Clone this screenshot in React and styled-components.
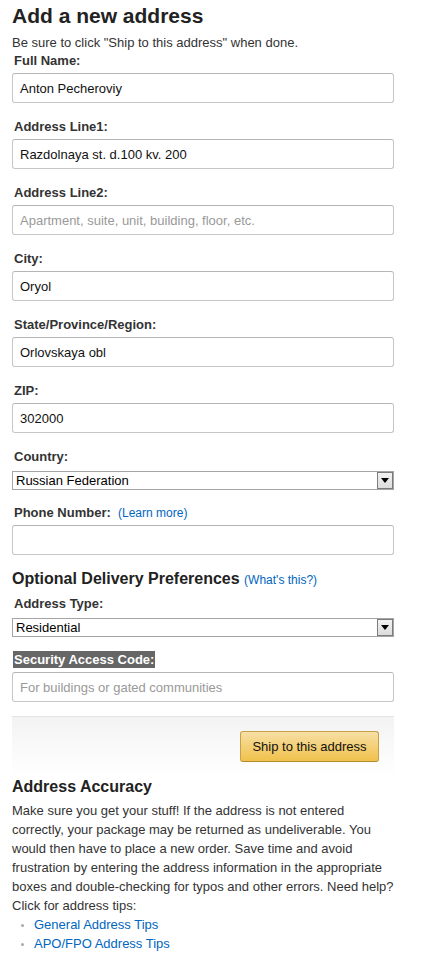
import styled, { createGlobalStyle } from 'styled-components'

const Global = createGlobalStyle`
  body {
    margin: 0;
    background: #fff;
    font-family: "Liberation Sans", Arial, sans-serif;
    color: #333;
  }
`

const Page = styled.div`
  width: 382px;
  padding: 4px 0 0 12px;
  font-size: 13px;
`

const Title = styled.h1`
  margin: 0;
  font-size: 21px;
  line-height: 24px;
  font-weight: bold;
  color: #222;
`

const Intro = styled.p`
  margin: 7px 0 2px;
  line-height: 16px;
`

const Field = styled.div`
  display: flex;
  flex-direction: column;
  gap: ${p => (p.$select ? '6px' : '4px')};
  margin-bottom: ${p => (p.$last ? '0' : p.$select ? '15px' : '16px')};
`

const Label = styled.label`
  padding-left: 2px;
  font-weight: bold;
  line-height: 16px;
  color: #333;
`

const Marked = styled.span`
  background: #666;
  color: #fff;
  padding: 1px 1px;
  margin-left: -1px;
`

const Link = styled.a`
  color: #0066c0;
  text-decoration: none;
  font-size: ${p => p.$size || '13px'};
  font-weight: normal;
  cursor: pointer;
`

const Input = styled.input`
  box-sizing: border-box;
  width: 100%;
  height: 30px;
  padding: 0 7px;
  border: 1px solid #c6c6c6;
  border-top-color: #b5b5b5;
  border-radius: 3px;
  font: 13px "Liberation Sans", Arial, sans-serif;
  color: #111;
  outline: none;
  &::placeholder {
    color: #999;
  }
`

const SelectBox = styled.div`
  display: flex;
  align-items: stretch;
  height: 19px;
  box-sizing: border-box;
  border: 1px solid #a5a5a5;
  background: #fff;
`

const Select = styled.select`
  flex: 1;
  appearance: none;
  border: none;
  background: transparent;
  padding: 0 0 0 3px;
  font: 13px "Liberation Sans", Arial, sans-serif;
  color: #000;
  outline: none;
`

const Arrow = styled.span`
  width: 16px;
  box-sizing: border-box;
  border: 1px solid #7c7c7c;
  background: linear-gradient(#f2f2f2, #dcdcdc);
  display: flex;
  align-items: center;
  justify-content: center;
`

const Section = styled.h2`
  margin: 14px 0 0;
  font-size: 16px;
  line-height: 20px;
  font-weight: bold;
  color: #222;
  & ${Link} {
    font-size: 12px;
  }
`

const SubField = styled(Field)`
  margin-top: 6px;
`

const ActionBar = styled.div`
  margin-top: 14px;
  height: 60px;
  box-sizing: border-box;
  border-top: 1px solid #e4e4e4;
  background: linear-gradient(#f3f3f3, #fff);
  display: flex;
  justify-content: flex-end;
  align-items: flex-start;
  padding: 14px 15px 0 0;
`

const Button = styled.button`
  width: 139px;
  height: 31px;
  border: 1px solid #c8a045;
  border-bottom-color: #b48b2c;
  border-radius: 3px;
  background: linear-gradient(#f7dfa5, #f0c14b);
  font: 13px "Liberation Sans", Arial, sans-serif;
  color: #111;
  cursor: pointer;
`

const Heading = styled.h3`
  margin: 0;
  font-size: 16px;
  line-height: 22px;
  font-weight: bold;
  color: #222;
`

const Body = styled.p`
  margin: 3px 0 0;
  line-height: 19px;
  color: #333;
`

const Tips = styled.ul`
  margin: 0;
  padding-left: 22px;
  line-height: 19px;
  li::marker {
    color: #aaa;
    font-size: 10px;
  }
`

const fields = [
  { label: 'Full Name:', value: 'Anton Pecheroviy' },
  { label: 'Address Line1:', value: 'Razdolnaya st. d.100 kv. 200' },
  { label: 'Address Line2:', value: '', placeholder: 'Apartment, suite, unit, building, floor, etc.' },
  { label: 'City:', value: 'Oryol' },
  { label: 'State/Province/Region:', value: 'Orlovskaya obl' },
  { label: 'ZIP:', value: '302000' },
]

const DropDown = ({ value }) => (
  <SelectBox>
    <Select defaultValue={value}>
      <option>{value}</option>
    </Select>
    <Arrow>
      <svg width="8" height="5" viewBox="0 0 8 5">
        <path d="M0 0h8L4 5z" fill="#000" />
      </svg>
    </Arrow>
  </SelectBox>
)

const App = () => {
  return (
    <Page>
      <Global />
      <Title>Add a new address</Title>
      <Intro>Be sure to click "Ship to this address" when done.</Intro>

      {fields.map(f => (
        <Field key={f.label}>
          <Label>{f.label}</Label>
          <Input defaultValue={f.value} placeholder={f.placeholder} />
        </Field>
      ))}

      <Field $select>
        <Label>Country:</Label>
        <DropDown value="Russian Federation" />
      </Field>

      <Field $last>
        <Label>
          Phone Number:&nbsp;&nbsp;<Link $size="12px">(Learn more)</Link>
        </Label>
        <Input />
      </Field>

      <Section>
        Optional Delivery Preferences <Link>(What's this?)</Link>
      </Section>

      <SubField $select>
        <Label>Address Type:</Label>
        <DropDown value="Residential" />
      </SubField>

      <Field $last>
        <Label>
          <Marked>Security Access Code:</Marked>
        </Label>
        <Input placeholder="For buildings or gated communities" />
      </Field>

      <ActionBar>
        <Button>Ship to this address</Button>
      </ActionBar>

      <Heading>Address Accuracy</Heading>
      <Body>
        Make sure you get your stuff! If the address is not entered correctly, your
        package may be returned as undeliverable. You would then have to place a new
        order. Save time and avoid frustration by entering the address information in
        the appropriate boxes and double-checking for typos and other errors. Need help?
        Click for address tips:
      </Body>
      <Tips>
        <li><Link>General Address Tips</Link></li>
        <li><Link>APO/FPO Address Tips</Link></li>
      </Tips>
    </Page>
  )
}

export default App
